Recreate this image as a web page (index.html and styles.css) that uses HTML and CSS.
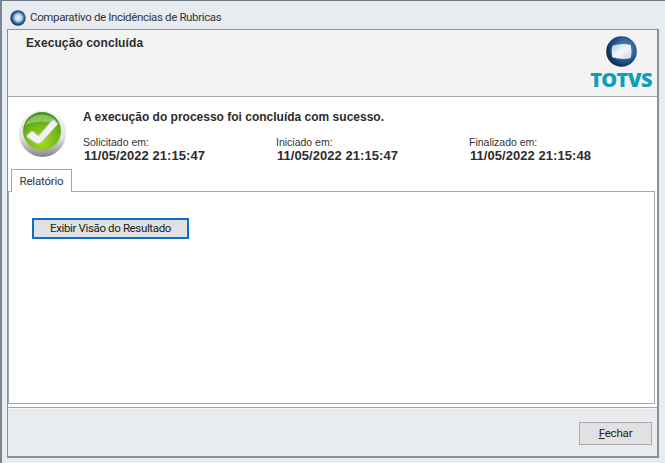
FILE: index.html
```html
<!DOCTYPE html>
<html lang="pt">
<head>
<meta charset="utf-8">
<title>Comparativo de Incidências de Rubricas</title>
<link rel="stylesheet" href="styles.css">
</head>
<body>
<div class="window">
  <div class="titlebar">
    <svg class="app-icon" width="16" height="16" viewBox="0 0 16 16">
      <defs>
        <radialGradient id="ta" cx="0.52" cy="0.48" r="0.55"><stop offset="0" stop-color="#eef4f8"/><stop offset="0.42" stop-color="#b4d0e4"/><stop offset="0.68" stop-color="#2f6ca5"/><stop offset="1" stop-color="#0e2140"/></radialGradient>
      </defs>
      <circle cx="8" cy="8" r="7.7" fill="url(#ta)"/>
    </svg>
    <span class="title">Comparativo de Incidências de Rubricas</span>
  </div>
  <div class="frame">
    <header class="head">
      <h1 class="head-title">Execução concluída</h1>
      <div class="logo">
        <svg width="31" height="31" viewBox="0 0 30 30">
          <defs>
            <radialGradient id="lg" cx="0.62" cy="0.42" r="0.68"><stop offset="0" stop-color="#5f9ccb"/><stop offset="0.6" stop-color="#235486"/><stop offset="1" stop-color="#0c1c3a"/></radialGradient>
            <linearGradient id="lc" x1="0" y1="0" x2="1" y2="1"><stop offset="0" stop-color="#a9cbe3"/><stop offset="0.5" stop-color="#f4f7fa"/><stop offset="1" stop-color="#c7d8e6"/></linearGradient>
          </defs>
          <circle cx="15" cy="15" r="14.8" fill="url(#lg)"/>
          <path d="M6 9.5 Q15 6.4 24 8.6 Q25.4 15 24 21.4 Q15 23.4 6 20.5 Q4.6 15 6 9.5Z" fill="url(#lc)"/>
        </svg>
        <span class="logo-text">TOTVS</span>
      </div>
    </header>
    <div class="body">
      <section class="status">
        <svg class="check" width="47" height="47" viewBox="0 0 47 47">
          <defs>
            <linearGradient id="rim" x1="0" y1="0" x2="0" y2="1"><stop offset="0" stop-color="#f2f2f2"/><stop offset="0.6" stop-color="#e2e2e2"/><stop offset="1" stop-color="#858585"/></linearGradient>
            <radialGradient id="gr" cx="0.5" cy="0.78" r="0.78"><stop offset="0" stop-color="#a6da1c"/><stop offset="0.6" stop-color="#6cb81a"/><stop offset="1" stop-color="#3f8f17"/></radialGradient>
          </defs>
          <circle cx="23.5" cy="23.5" r="23.5" fill="url(#rim)"/>
          <circle cx="23" cy="21" r="19" fill="url(#gr)"/>
          <path d="M6 15 A19 19 0 0 1 40 15 Q23 8 6 15Z" fill="#ffffff" opacity="0.32"/>
          <path d="M8 25.5 L12 21.5 Q13 20.8 14 21.5 L19.5 26 L33 10.5 Q34 9.6 35 10.3 L38 13 Q38.6 14 38 15 L22 32.5 Q19.5 34 17 33 L8.5 27.5 Q7.6 26.6 8 25.5Z" fill="#f2f2f2" stroke="#c9cfc6" stroke-width="1" stroke-linejoin="round"/>
        </svg>
        <div class="status-text">
          <p class="message">A execução do processo foi concluída com sucesso.</p>
          <div class="times">
            <div class="time"><span class="time-label">Solicitado em:</span><strong class="time-value">11/05/2022 21:15:47</strong></div>
            <div class="time"><span class="time-label">Iniciado em:</span><strong class="time-value">11/05/2022 21:15:47</strong></div>
            <div class="time"><span class="time-label">Finalizado em:</span><strong class="time-value">11/05/2022 21:15:48</strong></div>
          </div>
        </div>
      </section>
      <div class="tabs"><span class="tab">Relatório</span></div>
      <section class="pane">
        <button class="result-btn" type="button">Exibir Visão do Resultado</button>
      </section>
    </div>
    <footer class="foot">
      <button class="close-btn" type="button"><u>F</u>echar</button>
    </footer>
  </div>
</div>
</body>
</html>
```
FILE: styles.css
```css
* { box-sizing: border-box; }
html, body { margin: 0; padding: 0; }
body { width: 665px; height: 463px; overflow: hidden; background: #e8ebef; }
.window {
  width: 665px; height: 463px;
  display: flex; flex-direction: column;
  background: #e8ebef;
  border-top: 1px solid #717a83;
  border-left: 2px solid #7d868f;
  padding: 0 6px 5px 5px;
}
.titlebar {
  height: 28px; flex: none;
  display: flex; align-items: center; gap: 4px;
  margin-left: 3px;
  padding-top: 5px;
}
.title { font: 11.5px/1 "Roboto", "Open Sans", sans-serif; letter-spacing: -0.36px; color: #2f363d; }
.frame {
  flex: 1; min-height: 0;
  display: flex; flex-direction: column;
  border: 1px solid #8d9196;
  border-width: 1px 2px 2px 1px;
  width: 652px;
  background: #e8ebef;
}
.head {
  height: 67px; flex: none;
  background: #f3f3f3;
  border-bottom: 1px solid #a5a8ab;
  display: flex; justify-content: space-between;
  padding: 6px 5px 0 18px;
}
.head-title { margin: 0; font: bold 12px/14px "Liberation Sans", sans-serif; letter-spacing: 0.1px; color: #2d2d2d; }
.logo { display: flex; flex-direction: column; align-items: center; width: 62px; }
.logo svg { display: block; }
.logo-text { font: 800 20px/21px "Open Sans", "Liberation Sans", sans-serif; color: #109fb9; letter-spacing: -0.7px; margin-top: 2px; }
.body {
  flex: none; height: 311px;
  background: #ffffff;
  display: flex; flex-direction: column;
  border-bottom: 1px solid #a5a8ab;
}
.status { height: 72px; flex: none; display: flex; padding: 13px 0 0 11px; }
.check { flex: none; }
.status-text { margin-left: 17px; }
.message { margin: 0 0 12px; font: bold 12px/14px "Liberation Sans", sans-serif; color: #2d2d2d; }
.times { display: flex; }
.time { width: 193px; display: flex; flex-direction: column; }
.time-label { font: 10.5px/13px "Liberation Sans", sans-serif; color: #333; }
.time-value { font: bold 13px/13px "Liberation Sans", sans-serif; letter-spacing: 0.05px; color: #2d2d2d; padding-left: 1px; }
.tabs { height: 22px; flex: none; padding-left: 3px; position: relative; z-index: 1; }
.tab {
  display: block; width: 61px; height: 23px;
  background: #ffffff;
  border: 1px solid #a5a8ab; border-bottom: 0;
  font: 11.5px/22px "Roboto", "Open Sans", sans-serif; letter-spacing: -0.2px; color: #2f363d;
  text-align: center;
}
.pane {
  flex: none; height: 213px;
  background: #ffffff;
  border: 1px solid #a5a8ab;
  margin-right: 2px;
  padding: 26px 0 0 23px;
}
.result-btn {
  display: block; width: 157px; height: 21px; padding: 1px 0 0;
  background: #e1e1e1;
  border: 2px solid #0a6fc8;
  font: 11.5px/1 "Roboto", "Open Sans", sans-serif; letter-spacing: -0.36px; color: #222;
}
.foot { flex: 1; display: flex; justify-content: flex-end; padding: 13px 5px 0 0; background: #e8ebef; border-top: 1px solid #f6f7f8; }
.close-btn {
  width: 73px; height: 23px; padding: 0;
  background: #e1e1e1;
  border: 1px solid #adadad;
  font: 11.5px/1 "Roboto", "Open Sans", sans-serif; letter-spacing: -0.2px; color: #222;
}
```
